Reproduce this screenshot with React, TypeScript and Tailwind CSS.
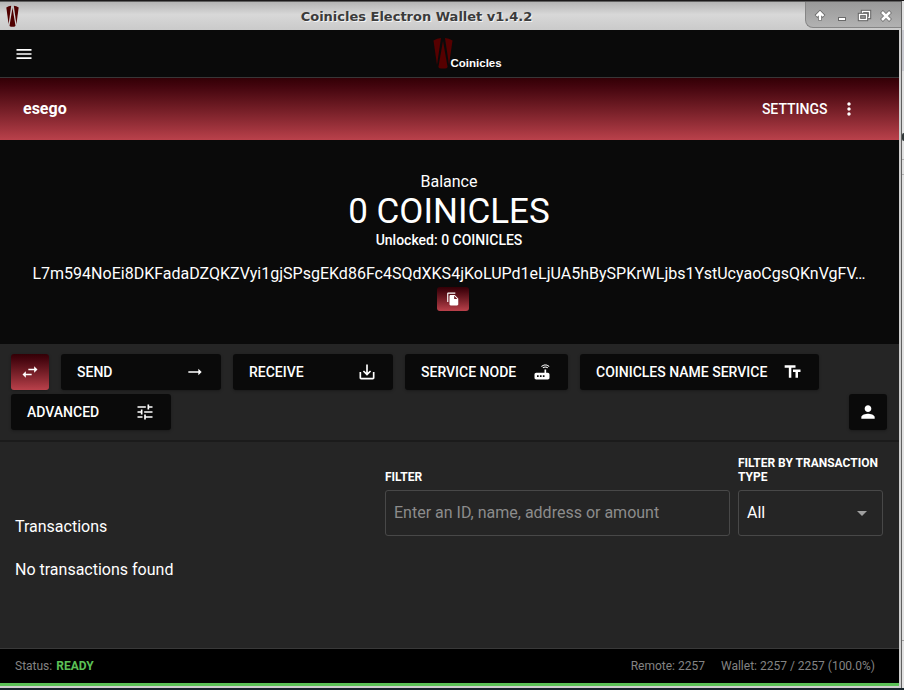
import type { ReactNode } from "react";
import {
  MdArrowDropDown,
  MdArrowRightAlt,
  MdFileCopy,
  MdFormatSize,
  MdMenu,
  MdMoreVert,
  MdPerson,
  MdRouter,
  MdSaveAlt,
  MdSwapHoriz,
  MdTune,
} from "react-icons/md";

function Logo({ className, fill }: { className: string; fill: string }) {
  return (
    <svg className={className} viewBox="0 0 20 32" preserveAspectRatio="none" fill={fill}>
      <path d="M0.5 3.5 Q4 1 8 1 L4 28 Z" />
      <path d="M19.5 3.5 Q16 1 12 1 L16 28 Z" />
      <path d="M10 4 L14.6 30 Q14 31.5 12 31.5 H8 Q6 31.5 5.4 30 Z" />
    </svg>
  );
}

function WindowControls() {
  return (
    <div className="flex h-[26px] w-[96px] shrink-0 rounded-bl-[8px] border-b border-l border-[#858585] bg-linear-to-b from-[#999] to-[#b2b2b2]">
      <svg className="h-[25px] w-[95px]" viewBox="0 0 95 25">
        <g fill="none" stroke="#6a6a6a" strokeWidth="4">
          <path d="M14 18.500V12M10 14.500L14 10.500L18 14.500" />
          <path d="M32 17H40" />
          <path d="M75.500 9.500L84.500 18.500M84.500 9.500L75.500 18.500" />
        </g>
        <g fill="none" stroke="#fff" strokeWidth="2">
          <path d="M14 18V12M10.5 14L14 10.5L17.5 14" strokeWidth="2.4" />
          <path d="M33 17H39" />
          <path d="M76 10L84 18M84 10L76 18" strokeWidth="2.6" />
        </g>
        <rect x="56.5" y="9.5" width="7" height="6" fill="none" stroke="#666" strokeWidth="3.4" />
        <rect x="56.5" y="9.5" width="7" height="6" fill="none" stroke="#fff" strokeWidth="1.3" />
        <rect x="53.5" y="12.5" width="7" height="5" fill="#999" stroke="#666" strokeWidth="3.4" />
        <rect x="53.5" y="12.5" width="7" height="5" fill="none" stroke="#fff" strokeWidth="1.3" />
      </svg>
    </div>
  );
}

function ActionButton({ label, icon, width }: { label: string; icon: ReactNode; width: string }) {
  return (
    <button
      className={`flex h-9 items-center justify-between rounded-[3px] bg-[#0a0a0a] px-4 text-[14px] font-medium shadow-[0_1px_3px_rgba(0,0,0,0.3)] ${width}`}
    >
      <span>{label}</span>
      {icon}
    </button>
  );
}

export default function App() {
  return (
    <div className="flex h-[690px] w-[904px] flex-col overflow-hidden bg-[#17232b] font-[Roboto,sans-serif] text-white">
      <div className="h-px bg-[#1c1a1b]" />
      <div className="flex h-[687px]">
        <div className="flex w-[902px] flex-col border-t border-r border-[#606060] bg-[#cecece]">
          <header className="flex h-7 items-start bg-linear-to-b from-[#b5b5b5] via-[#d8d8d8] via-45% to-[#cacaca]">
            <Logo className="mt-[3px] ml-[6px] h-[22px] w-[13px]" fill="#500000" />
            <h1 className="flex-1 pr-[15px] pl-[24px] text-center font-['DejaVu_Sans',sans-serif] text-[13px] leading-[30px] font-bold text-[#3b3b3b] [text-shadow:1px_1px_0_#f4f4f4]">
              Coinicles Electron Wallet v1.4.2
            </h1>
            <WindowControls />
          </header>

          <div className="flex w-[899px] flex-col">
            <nav className="flex h-12 border-b border-[#393637] bg-[#0a0a0a]">
              <MdMenu className="mt-[14px] ml-[14px] size-5" />
              <div className="mt-[7px] ml-[399px] flex">
                <Logo className="h-8 w-5" fill="#560000" />
                <span className="mt-[18px] -ml-[2.5px] font-['Liberation_Sans',sans-serif] text-[11.5px] leading-[16px] font-bold">
                  Coinicles
                </span>
              </div>
            </nav>

            <section className="flex h-[62px] items-center bg-linear-to-b from-[#330006] to-[#ba414b] pr-[40px] pl-[23px]">
              <span className="flex-1 text-[16px] font-bold">esego</span>
              <span className="mr-[11.5px] text-[14px] font-medium">SETTINGS</span>
              <MdMoreVert className="size-5" />
            </section>

            <section className="flex h-[204px] flex-col items-center bg-[#0a0a0a] pt-[30px] pr-px">
              <span className="text-[16px] leading-6">Balance</span>
              <span className="text-[35px] leading-[35px]">0 COINICLES</span>
              <span className="text-[14px] leading-[22px] font-medium">Unlocked: 0 COINICLES</span>
              <span className="mt-[11px] text-[16px] leading-6 tracking-[0.008px] whitespace-nowrap">
                L7m594NoEi8DKFadaDZQKZVyi1gjSPsgEKd86Fc4SQdXKS4jKoLUPd1eLjUA5hBySPKrWLjbs1YstUcyaoCgsQKnVgFV…
              </span>
              <button className="mt-px ml-[8px] flex h-6 w-8 items-center justify-center rounded-[3px] bg-linear-to-b from-[#330006] to-[#ba414b]">
                <MdFileCopy className="size-[14px]" />
              </button>
            </section>

            <section className="flex h-[98px] flex-col gap-1 border-b-2 border-[#1b1b1b] bg-[#252525] pt-[10px] pr-3 pl-[11px]">
              <div className="flex gap-3">
                <button className="flex h-9 w-[38px] items-center justify-center rounded-[3px] bg-linear-to-b from-[#330006] to-[#ba414b] shadow-[0_1px_3px_rgba(0,0,0,0.3)]">
                  <MdSwapHoriz className="size-5" />
                </button>
                <ActionButton label="SEND" width="w-[160px]" icon={<MdArrowRightAlt className="size-5" />} />
                <ActionButton label="RECEIVE" width="w-[160px]" icon={<MdSaveAlt className="size-5" />} />
                <ActionButton label="SERVICE NODE" width="w-[163px]" icon={<MdRouter className="size-5" />} />
                <ActionButton
                  label="COINICLES NAME SERVICE"
                  width="w-[239px]"
                  icon={<MdFormatSize className="size-5 -scale-x-100" />}
                />
              </div>
              <div className="flex justify-between">
                <ActionButton label="ADVANCED" width="w-[160px]" icon={<MdTune className="size-5" />} />
                <button className="flex h-9 w-[38px] items-center justify-center rounded-[3px] bg-[#0a0a0a] shadow-[0_1px_3px_rgba(0,0,0,0.3)]">
                  <MdPerson className="size-5" />
                </button>
              </div>
            </section>

            <section className="h-[206px] bg-[#252525] pr-4 pl-[15px]">
              <div className="flex h-[94px] items-end">
                <h2 className="w-[370px] text-[16px] leading-[18px]">Transactions</h2>
                <label className="w-[345px] text-[12px] leading-[14px] font-bold">
                  FILTER
                  <input
                    className="mt-[6px] block h-[46px] w-full rounded-[3px] border border-[#484848] bg-transparent px-2 pb-[2px] text-[16px] font-normal placeholder:text-[#8c8c8c]"
                    placeholder="Enter an ID, name, address or amount"
                  />
                </label>
                <div className="ml-2 w-[145px] text-[12px] leading-[14px] font-bold">
                  FILTER BY TRANSACTION TYPE
                  <button className="mt-[6px] flex h-[46px] w-full items-center justify-between rounded-[3px] border border-[#484848] pr-2 pl-2 text-[16px] font-normal">
                    All
                    <MdArrowDropDown className="size-6 text-[#a0a0a0]" />
                  </button>
                </div>
              </div>
              <p className="mt-[22px] text-[16px] leading-6">No transactions found</p>
            </section>

            <footer className="flex h-[38px] items-center border-t border-b-3 border-t-[#393939] border-b-[#5bc156] bg-black pr-[24px] pl-[15px] text-[12px] text-[#838383]">
              <span className="mr-1">Status:</span>
              <span className="flex-1 font-bold text-[#5bc156]">READY</span>
              <span className="mr-4">Remote: 2257</span>
              <span>Wallet: 2257 / 2257 (100.0%)</span>
            </footer>
          </div>
        </div>
        <div className="flex w-[2px] flex-col bg-[#e1e1e1] pt-[29px]">
          <div className="h-[41px] bg-[#c9cad0]" />
          <div className="mt-[62px] h-[8px] rounded-l-full bg-[#303738]" />
          <div className="mt-[18px] h-px bg-[#b0b0b0]" />
          <div className="mt-[14px] h-px bg-[#b0b0b0]" />
          <div className="mt-[465px] h-px bg-[#a0a0a0]" />
        </div>
      </div>
    </div>
  );
}
